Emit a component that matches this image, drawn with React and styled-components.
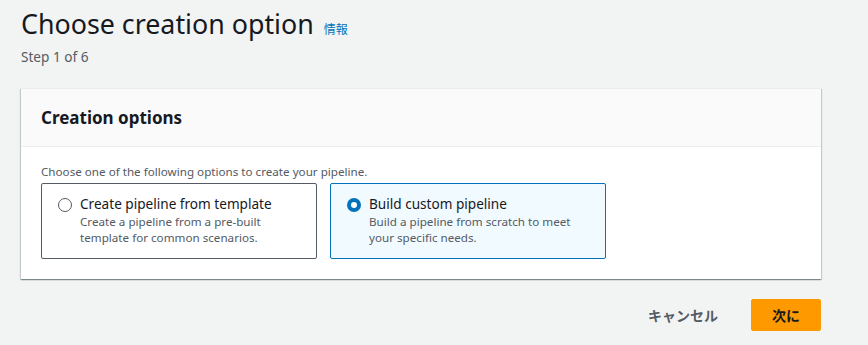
import React from 'react';
import styled, {createGlobalStyle} from 'styled-components';

const GlobalStyle = createGlobalStyle`
  body {
    margin: 0;
    background: #f2f3f3;
    font-family: "Noto Sans", "Noto Sans CJK JP", sans-serif;
    color: #16191f;
  }
`;

const StyledPage = styled.div`
  padding: 6px 47px 0 21px;
`;

const StyledTitleRow = styled.div`
  display: flex;
  align-items: baseline;
  gap: 10px;
`;

const StyledTitle = styled.h1`
  margin: 0;
  font-size: 26.8px;
  font-weight: 400;
  line-height: 36px;
`;

const StyledInfo = styled.a`
  color: #0073bb;
  font-size: 12px;
  font-family: "Noto Sans CJK JP", sans-serif;
`;

const StyledStep = styled.p`
  margin: 5px 0 0;
  color: #545b64;
  font-size: 13.6px;
  line-height: 20px;
`;

const StyledPanel = styled.section`
  margin-top: 21px;
  background: #fff;
  box-shadow: 0 1px 1px 0 rgba(0, 28, 36, 0.3), 1px 1px 1px 0 rgba(0, 28, 36, 0.15), -1px 1px 1px 0 rgba(0, 28, 36, 0.15);
  border-top: 1px solid #eaeded;
`;

const StyledPanelHeader = styled.div`
  background: #fafafa;
  border-bottom: 1px solid #eaeded;
  padding: 17px 20px 16px;
`;

const StyledPanelTitle = styled.h2`
  margin: 0;
  font-size: 17px;
  font-weight: 700;
  line-height: 24px;
`;

const StyledPanelBody = styled.div`
  padding: 17px 20px 20px;
`;

const StyledHint = styled.p`
  margin: 0 0 3px;
  color: #545b64;
  font-size: 11.65px;
  line-height: 16px;
`;

const StyledTiles = styled.div`
  display: flex;
  gap: 13px;
`;

const StyledTile = styled.label`
  box-sizing: border-box;
  width: 276px;
  height: 76px;
  display: flex;
  gap: 8px;
  padding: 10px 15px;
  border: 1px solid ${({selected}) => (selected ? '#0073bb' : '#545b64')};
  border-radius: 2px;
  background: ${({selected}) => (selected ? '#f1faff' : '#fff')};
  cursor: pointer;
`;

const StyledRadio = styled.span`
  box-sizing: border-box;
  flex: none;
  width: 14px;
  height: 14px;
  margin-top: 4px;
  margin-left: 1px;
  border-radius: 50%;
  border: ${({selected}) => (selected ? '4px solid #0073bb' : '1px solid #545b64')};
  background: #fff;
`;

const StyledTileText = styled.div`
  display: flex;
  flex-direction: column;
`;

const StyledTileTitle = styled.span`
  font-size: 13.6px;
  line-height: 20px;
`;

const StyledTileDesc = styled.span`
  color: #545b64;
  font-size: 11.65px;
  line-height: 16px;
`;

const StyledActions = styled.div`
  display: flex;
  justify-content: flex-end;
  align-items: center;
  gap: 29px;
  margin-top: 20px;
`;

const StyledButton = styled.button`
  font-family: "Noto Sans CJK JP", sans-serif;
  font-size: 14px;
  font-weight: 700;
  border-radius: 2px;
  height: 32px;
  cursor: pointer;
  border: ${({primary}) => (primary ? '1px solid #ff9900' : 'none')};
  background: ${({primary}) => (primary ? '#ff9900' : 'transparent')};
  color: ${({primary}) => (primary ? '#16191f' : '#545b64')};
  padding: ${({primary}) => (primary ? '0 20px' : '0 4px')};
`;

const options = [
  {
    title: 'Create pipeline from template',
    desc: ['Create a pipeline from a pre-built', 'template for common scenarios.'],
  },
  {
    title: 'Build custom pipeline',
    desc: ['Build a pipeline from scratch to meet', 'your specific needs.'],
    selected: true,
  },
];

const App = () => (
  <StyledPage>
    <GlobalStyle />
    <StyledTitleRow>
      <StyledTitle>Choose creation option</StyledTitle>
      <StyledInfo>情報</StyledInfo>
    </StyledTitleRow>
    <StyledStep>Step 1 of 6</StyledStep>
    <StyledPanel>
      <StyledPanelHeader>
        <StyledPanelTitle>Creation options</StyledPanelTitle>
      </StyledPanelHeader>
      <StyledPanelBody>
        <StyledHint>Choose one of the following options to create your pipeline.</StyledHint>
        <StyledTiles>
          {options.map((opt) => (
            <StyledTile key={opt.title} selected={opt.selected}>
              <StyledRadio selected={opt.selected} />
              <StyledTileText>
                <StyledTileTitle>{opt.title}</StyledTileTitle>
                {opt.desc.map((line) => (
                  <StyledTileDesc key={line}>{line}</StyledTileDesc>
                ))}
              </StyledTileText>
            </StyledTile>
          ))}
        </StyledTiles>
      </StyledPanelBody>
    </StyledPanel>
    <StyledActions>
      <StyledButton>キャンセル</StyledButton>
      <StyledButton primary>次に</StyledButton>
    </StyledActions>
  </StyledPage>
);

export default App;
